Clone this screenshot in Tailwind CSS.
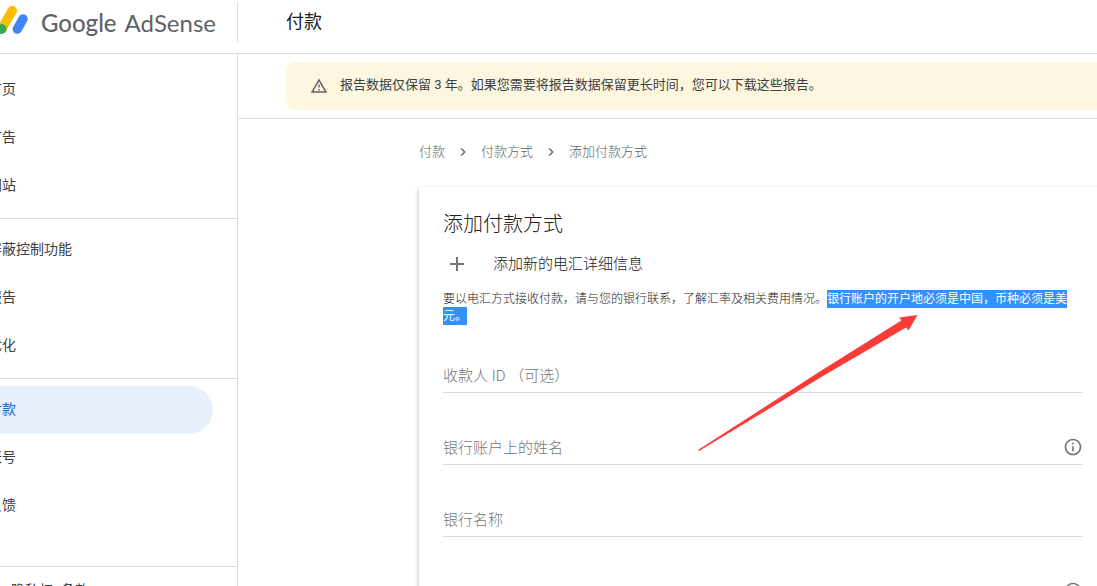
<!DOCTYPE html>
<html lang="zh-CN">
<head>
<meta charset="utf-8">
<title>Google AdSense - 付款</title>
<script src="https://cdn.jsdelivr.net/npm/@tailwindcss/browser@4"></script>
</head>
<body class="flex h-screen flex-col overflow-hidden bg-white font-['Roboto','Noto_Sans_CJK_SC',sans-serif] text-[#3c4043]">
  <header class="flex h-[54px] shrink-0 border-b border-[#dadce0]">
    <a href="#" aria-label="Google AdSense" class="mt-0.5 flex h-10 w-[238px] shrink-0 items-center border-r border-[#dadce0]">
      <svg class="h-10 w-10 shrink-0" viewBox="0 0 40 40" fill="none" stroke-linecap="round" aria-hidden="true">
        <path d="M12.300 8.500L2 26.500" stroke="#fbbc04" stroke-width="9.500"/>
        <circle cx="1.500" cy="27" r="5" fill="#34a853"/>
        <path d="M23 17L17.300 27" stroke="#4285f4" stroke-width="9.500"/>
      </svg>
      <span class="flex gap-2 pt-0.5 pl-px font-['Lato','Noto_Sans_CJK_SC',sans-serif] text-2xl whitespace-nowrap text-[#5f6368]"><span class="font-medium">Google</span><span>AdSense</span></span>
    </a>
    <h1 class="ml-12 pt-2 text-lg text-[#202124]">付款</h1>
  </header>

  <div class="flex min-h-0 flex-1">
    <nav aria-label="主菜单" class="w-[238px] shrink-0 overflow-hidden border-r border-[#dadce0] pt-3 text-sm">
      <ul class="border-b border-[#dadce0] pb-2">
        <li><a href="#" class="-ml-3 flex h-12 items-center pb-0.5">首页</a></li>
        <li><a href="#" class="-ml-3 flex h-12 items-center pb-0.5">广告</a></li>
        <li><a href="#" class="-ml-3 flex h-12 items-center pb-0.5">网站</a></li>
      </ul>
      <ul class="border-b border-[#dadce0] pt-[7px] pb-2">
        <li><a href="#" class="-ml-3 flex h-12 items-center pb-0.5">屏蔽控制功能</a></li>
        <li><a href="#" class="-ml-3 flex h-12 items-center pb-0.5">报告</a></li>
        <li><a href="#" class="-ml-3 flex h-12 items-center pb-0.5">优化</a></li>
      </ul>
      <ul class="border-b border-[#dadce0] pt-[7px] pb-9">
        <li><a href="#" aria-current="page" class="mr-6 -ml-3 flex h-12 items-center rounded-r-full bg-[#e8f0fe] pb-0.5 text-[#1967d2]">付款</a></li>
        <li><a href="#" class="-ml-3 flex h-12 items-center pb-0.5">账号</a></li>
        <li><a href="#" class="-ml-3 flex h-12 items-center pb-0.5">反馈</a></li>
      </ul>
      <div class="flex gap-2 pt-[13px] pl-[11px] leading-5">
        <a href="#">隐私权</a>
        <a href="#">条款</a>
      </div>
    </nav>

    <main class="min-w-0 flex-1 overflow-hidden">
      <div class="border-b border-[#dadce0] py-2 pl-12">
        <div role="status" class="flex h-12 items-center rounded-l-lg bg-[#fef7e0] pl-6 text-[13px]">
          <svg class="h-[18px] w-[18px] shrink-0" viewBox="0 0 24 24" fill="#5f6368" aria-hidden="true"><path d="M12 5.990L19.530 19H4.470L12 5.990M12 2L1 21h22L12 2zm1 14h-2v2h2v-2zm0-6h-2v4h2v-4z"/></svg>
          <p class="ml-3 pb-0.5">报告数据仅保留 3 年。如果您需要将报告数据保留更长时间，您可以下载这些报告。</p>
        </div>
      </div>

      <div class="-mr-2.5 pt-[23px] pl-[181px]">
        <nav aria-label="面包屑" class="flex h-5 items-center text-[13px] font-light text-[#616161]">
          <a href="#">付款</a>
          <svg class="mx-2.5 h-4 w-4" viewBox="0 0 24 24" fill="#616161" aria-hidden="true"><path d="M10 6L8.590 7.410 13.170 12l-4.580 4.590L10 18l6-6z"/></svg>
          <a href="#">付款方式</a>
          <svg class="mx-2.5 h-4 w-4" viewBox="0 0 24 24" fill="#616161" aria-hidden="true"><path d="M10 6L8.590 7.410 13.170 12l-4.580 4.590L10 18l6-6z"/></svg>
          <span>添加付款方式</span>
        </nav>

        <section class="relative mt-[25px] rounded-xs px-6 pt-[23px] pb-6 font-light text-[#212121] shadow-[0_2px_4px_rgba(0,0,0,0.35)]">
          <h2 class="text-xl leading-7">添加付款方式</h2>
          <button type="button" class="mt-3 flex h-7 w-full items-center text-[15px]">
            <svg class="ml-[7px] h-3.5 w-3.5" viewBox="0 0 14 14" fill="#757575" aria-hidden="true"><path d="M6 0h2v6h6v2H8v6H6V8H0V6h6z"/></svg>
            <span class="ml-[29px]">添加新的电汇详细信息</span>
          </button>
          <p class="mt-[13px] text-xs leading-[17px]">要以电汇方式接收付款，请与您的银行联系，了解汇率及相关费用情况。<mark class="bg-[#3390ff] py-0.5 font-normal text-white">银行账户的开户地必须是中国，币种必须是美元。</mark></p>

          <form class="mt-[35px] flex flex-col gap-[39px] text-[15px]">
            <input type="text" aria-label="收款人 ID" placeholder="收款人 ID （可选）" class="h-[33px] w-full border-b border-[#dadada] outline-none placeholder:text-[#757575]">
            <div class="flex h-[33px] items-center border-b border-[#dadada]">
              <input type="text" aria-label="银行账户上的姓名" placeholder="银行账户上的姓名" class="h-full min-w-0 flex-1 outline-none placeholder:text-[#757575]">
              <button type="button" aria-label="银行账户上的姓名说明" class="pb-0.5"><svg class="h-5 w-5" viewBox="0 0 24 24" fill="#757575" aria-hidden="true"><path d="M11 17h2v-6h-2v6zm1-15C6.480 2 2 6.480 2 12s4.480 10 10 10 10-4.480 10-10S17.520 2 12 2zm0 18c-4.410 0-8-3.590-8-8s3.590-8 8-8 8 3.590 8 8-3.590 8-8 8zM11 9h2V7h-2v2z"/></svg></button>
            </div>
            <input type="text" aria-label="银行名称" placeholder="银行名称" class="h-[33px] w-full border-b border-[#dadada] outline-none placeholder:text-[#757575]">
            <div class="flex h-[33px] items-center border-b border-[#dadada]">
              <input type="text" aria-label="SWIFT BIC" class="h-full min-w-0 flex-1 outline-none">
              <button type="button" aria-label="SWIFT BIC 说明" class="pb-0.5"><svg class="h-5 w-5" viewBox="0 0 24 24" fill="#757575" aria-hidden="true"><path d="M11 17h2v-6h-2v6zm1-15C6.480 2 2 6.480 2 12s4.480 10 10 10 10-4.480 10-10S17.520 2 12 2zm0 18c-4.410 0-8-3.590-8-8s3.590-8 8-8 8 3.590 8 8-3.590 8-8 8zM11 9h2V7h-2v2z"/></svg></button>
            </div>
          </form>

          <svg class="pointer-events-none absolute top-[127px] left-[279px] h-[138px] w-[222px]" viewBox="0 0 222 138" fill="#fb3b38" aria-hidden="true"><path d="M219.500 1L201.300 3.500L203.300 6.500L125 55.500L0 136L1 137L125 62L208 13.500L210.500 16.500Z"/></svg>
        </section>
      </div>
    </main>
  </div>
</body>
</html>
